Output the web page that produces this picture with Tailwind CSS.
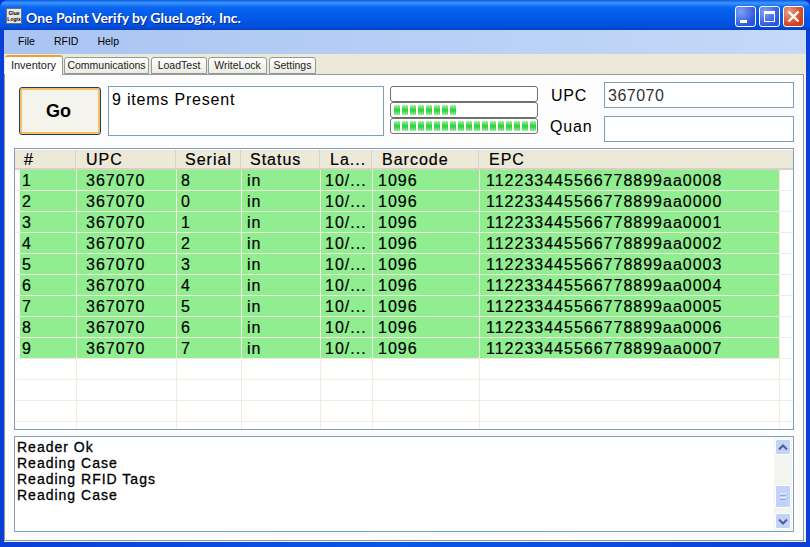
<!DOCTYPE html>
<html lang="en">

<head>
  <meta charset="UTF-8">
  <title>One Point Verify by GlueLogix, Inc.</title>
  <script src="https://cdn.jsdelivr.net/npm/@tailwindcss/browser@4"></script>
</head>

<body class="w-[810px] h-[547px] overflow-hidden bg-[#0831d9] font-['Liberation_Sans',sans-serif] text-black">
  <div class="h-[547px] flex flex-col rounded-t-lg overflow-hidden bg-[linear-gradient(to_right,#0a3fd8,#0a57e8_50%,#0a3fd8)]">

    <!-- title bar -->
    <div class="h-[30px] shrink-0 flex items-center pl-[6px] pr-[6px] pt-[2px] bg-[linear-gradient(to_bottom,#0a5be0_0px,#3d95ff_3px,#0a66f0_7px,#0358e8_18px,#0350e0_26px,#0240c8_30px)]">
      <div class="w-4 h-4 bg-[#e8e8e8] border border-gray-500 flex flex-col items-center justify-center text-[5px] leading-[6px] font-bold overflow-hidden">
        <span>Glue</span>
        <span>Logix</span>
      </div>
      <div class="ml-[4px] mt-[2px] text-white font-bold text-[14px] font-['Lato',sans-serif] [text-shadow:1px_1px_0_#0a2a90]">One Point Verify by GlueLogix, Inc.</div>
      <div class="ml-auto flex gap-[3px]">
        <div class="relative w-[21px] h-[21px] rounded-[3px] border border-white bg-[radial-gradient(circle_at_25%_25%,#7f9ff5,#2a55dd_75%)]">
          <div class="absolute left-[4px] top-[13px] w-[7px] h-[3px] bg-white"></div>
        </div>
        <div class="relative w-[21px] h-[21px] rounded-[3px] border border-white bg-[radial-gradient(circle_at_25%_25%,#7f9ff5,#2a55dd_75%)]">
          <div class="absolute left-[4px] top-[4px] w-[11px] h-[11px] border border-white border-t-[3px]"></div>
        </div>
        <div class="w-[21px] h-[21px] rounded-[3px] border border-white bg-[radial-gradient(circle_at_25%_25%,#ec9a80,#d2401c_70%)] flex items-center justify-center">
          <svg width="13" height="13" viewBox="0 0 13 13"><path d="M1.5 1.5 11.5 11.5M11.5 1.5 1.5 11.5" stroke="#fff" stroke-width="2.4" /></svg>
        </div>
      </div>
    </div>

    <!-- window body -->
    <div class="h-[512px] mx-[4px] flex flex-col bg-[#f3f2ec]">

      <!-- menu -->
      <div class="h-[24px] shrink-0 flex items-center pl-[14px] gap-[19px] text-[10.5px] bg-[linear-gradient(to_right,#a9c4f2,#c5d9f8)]">
        <span>File</span>
        <span>RFID</span>
        <span>Help</span>
      </div>

      <!-- tabs -->
      <div class="h-[20px] shrink-0 flex items-end gap-[1px] pl-[1px] bg-[#ece9d8] text-[11px] text-[#222]">
        <div class="relative z-10 w-[58px] h-[20px] -mb-[1px] flex items-center justify-center pb-[2px] bg-white border-r border-[#919b9c] border-t-[2px] border-t-[#f0a030] rounded-t-[3px]">Inventory</div>
        <div class="w-[85px] h-[17px] flex items-center justify-center text-[10.5px] bg-[linear-gradient(to_bottom,#ffffff,#ecebe0)] border border-[#919b9c] rounded-t-[3px]">Communications</div>
        <div class="ml-[1px] w-[56px] h-[17px] flex items-center justify-center text-[10.5px] bg-[linear-gradient(to_bottom,#ffffff,#ecebe0)] border border-[#919b9c] rounded-t-[3px]">LoadTest</div>
        <div class="w-[59px] h-[17px] flex items-center justify-center text-[10.5px] bg-[linear-gradient(to_bottom,#ffffff,#ecebe0)] border border-[#919b9c] rounded-t-[3px]">WriteLock</div>
        <div class="ml-[1px] w-[47px] h-[17px] flex items-center justify-center text-[10.5px] bg-[linear-gradient(to_bottom,#ffffff,#ecebe0)] border border-[#919b9c] rounded-t-[3px]">Settings</div>
      </div>

      <!-- tab page -->
      <div class="w-[800px] h-[467px] flex flex-col border border-[#919b9c] bg-[#fdfdfe] pl-[9px] pr-[9px]">

        <!-- top controls -->
        <div class="h-[73px] shrink-0 flex">
          <button class="ml-[5px] mt-[12px] w-[82px] h-[48px] rounded-[3px] border border-[#1f3f70] bg-[#f4f3ec] shadow-[inset_0_0_0_2px_#f5c060] text-[18px] font-bold pr-[3px]">Go</button>
          <div class="ml-[7px] mt-[11px] w-[276px] h-[50px] border border-[#7f9db9] bg-white pl-[3px] pt-[3px] text-[16px] leading-[20px] tracking-[0.8px]">9 items Present</div>

          <div class="ml-[6px] mt-[11px] w-[148px] flex flex-col">
            <div class="h-[16px] border border-[#707070] rounded-[3px] bg-white"></div>
            <div class="h-[16px] border border-[#707070] rounded-[3px] bg-white py-[2px] pl-[3px] flex gap-[2px]">
              <i class="w-[6px] bg-[linear-gradient(to_bottom,#b4efb8,#2ed63e_45%,#2ed63e_60%,#a4ebaa)]"></i><i class="w-[6px] bg-[linear-gradient(to_bottom,#b4efb8,#2ed63e_45%,#2ed63e_60%,#a4ebaa)]"></i><i class="w-[6px] bg-[linear-gradient(to_bottom,#b4efb8,#2ed63e_45%,#2ed63e_60%,#a4ebaa)]"></i><i class="w-[6px] bg-[linear-gradient(to_bottom,#b4efb8,#2ed63e_45%,#2ed63e_60%,#a4ebaa)]"></i><i class="w-[6px] bg-[linear-gradient(to_bottom,#b4efb8,#2ed63e_45%,#2ed63e_60%,#a4ebaa)]"></i><i class="w-[6px] bg-[linear-gradient(to_bottom,#b4efb8,#2ed63e_45%,#2ed63e_60%,#a4ebaa)]"></i><i class="w-[6px] bg-[linear-gradient(to_bottom,#b4efb8,#2ed63e_45%,#2ed63e_60%,#a4ebaa)]"></i><i class="w-[6px] bg-[linear-gradient(to_bottom,#b4efb8,#2ed63e_45%,#2ed63e_60%,#a4ebaa)]"></i>
            </div>
            <div class="h-[16px] border border-[#707070] rounded-[3px] bg-white py-[2px] pl-[3px] flex gap-[2px] overflow-hidden">
              <i class="w-[6px] shrink-0 bg-[linear-gradient(to_bottom,#b4efb8,#2ed63e_45%,#2ed63e_60%,#a4ebaa)]"></i><i class="w-[6px] shrink-0 bg-[linear-gradient(to_bottom,#b4efb8,#2ed63e_45%,#2ed63e_60%,#a4ebaa)]"></i><i class="w-[6px] shrink-0 bg-[linear-gradient(to_bottom,#b4efb8,#2ed63e_45%,#2ed63e_60%,#a4ebaa)]"></i><i class="w-[6px] shrink-0 bg-[linear-gradient(to_bottom,#b4efb8,#2ed63e_45%,#2ed63e_60%,#a4ebaa)]"></i><i class="w-[6px] shrink-0 bg-[linear-gradient(to_bottom,#b4efb8,#2ed63e_45%,#2ed63e_60%,#a4ebaa)]"></i><i class="w-[6px] shrink-0 bg-[linear-gradient(to_bottom,#b4efb8,#2ed63e_45%,#2ed63e_60%,#a4ebaa)]"></i><i class="w-[6px] shrink-0 bg-[linear-gradient(to_bottom,#b4efb8,#2ed63e_45%,#2ed63e_60%,#a4ebaa)]"></i><i class="w-[6px] shrink-0 bg-[linear-gradient(to_bottom,#b4efb8,#2ed63e_45%,#2ed63e_60%,#a4ebaa)]"></i><i class="w-[6px] shrink-0 bg-[linear-gradient(to_bottom,#b4efb8,#2ed63e_45%,#2ed63e_60%,#a4ebaa)]"></i><i class="w-[6px] shrink-0 bg-[linear-gradient(to_bottom,#b4efb8,#2ed63e_45%,#2ed63e_60%,#a4ebaa)]"></i><i class="w-[6px] shrink-0 bg-[linear-gradient(to_bottom,#b4efb8,#2ed63e_45%,#2ed63e_60%,#a4ebaa)]"></i><i class="w-[6px] shrink-0 bg-[linear-gradient(to_bottom,#b4efb8,#2ed63e_45%,#2ed63e_60%,#a4ebaa)]"></i><i class="w-[6px] shrink-0 bg-[linear-gradient(to_bottom,#b4efb8,#2ed63e_45%,#2ed63e_60%,#a4ebaa)]"></i><i class="w-[6px] shrink-0 bg-[linear-gradient(to_bottom,#b4efb8,#2ed63e_45%,#2ed63e_60%,#a4ebaa)]"></i><i class="w-[6px] shrink-0 bg-[linear-gradient(to_bottom,#b4efb8,#2ed63e_45%,#2ed63e_60%,#a4ebaa)]"></i><i class="w-[6px] shrink-0 bg-[linear-gradient(to_bottom,#b4efb8,#2ed63e_45%,#2ed63e_60%,#a4ebaa)]"></i><i class="w-[6px] shrink-0 bg-[linear-gradient(to_bottom,#b4efb8,#2ed63e_45%,#2ed63e_60%,#a4ebaa)]"></i><i class="w-[6px] shrink-0 bg-[linear-gradient(to_bottom,#b4efb8,#2ed63e_45%,#2ed63e_60%,#a4ebaa)]"></i>
            </div>
          </div>

          <div class="ml-[12px] mt-[7px] flex flex-col gap-[8px] text-[16px] tracking-[0.8px]">
            <div class="h-[26px] flex items-center">
              <span class="w-[54px] pl-[1px] pt-[1px]">UPC</span>
              <div class="w-[190px] h-[26px] border border-[#7f9db9] bg-white pl-[3px] pt-[1px] flex items-center text-[#333] tracking-[0.5px]">367070</div>
            </div>
            <div class="h-[26px] flex items-center">
              <span class="w-[54px] -mt-[4px]">Quan</span>
              <div class="w-[190px] h-[26px] border border-[#7f9db9] bg-white"></div>
            </div>
          </div>
        </div>

        <!-- grid -->
        <div class="w-[780px] h-[282px] shrink-0 border border-[#7f9db9] bg-white overflow-hidden text-[16px] tracking-[1px] [-webkit-text-stroke:0.2px_black]">
          <div class="mt-[1px] h-[20px] flex bg-[#ece9d8] border-b-[2px] border-[#d6d2c2] leading-[20px]">
            <div class="w-[60px] pl-[9px]">#</div>
            <div class="w-[100px] pl-[10px] border-l border-[#d8d5c6]">UPC</div>
            <div class="w-[65px] pl-[9px] border-l border-[#d8d5c6]">Serial</div>
            <div class="w-[79px] pl-[9px] border-l border-[#d8d5c6]">Status</div>
            <div class="w-[52px] pl-[10px] border-l border-[#d8d5c6]">La...</div>
            <div class="w-[107px] pl-[10px] border-l border-[#d8d5c6]">Barcode</div>
            <div class="w-[300px] pl-[10px] border-l border-[#d8d5c6]">EPC</div>
          </div>

          <div class="flex flex-col">
            <div class="h-[21px] flex pl-[5px] leading-[22px] border-b border-[#f0eddf]"><div class="w-[57px] pl-[2px] bg-[#90ee90] border-r border-[#f0eddf]">1</div><div class="w-[100px] pl-[9px] bg-[#90ee90] border-r border-[#f0eddf]">367070</div><div class="w-[65px] pl-[4px] bg-[#90ee90] border-r border-[#f0eddf]">8</div><div class="w-[79px] pl-[5px] bg-[#90ee90] border-r border-[#f0eddf]">in</div><div class="w-[52px] pl-[4px] bg-[#90ee90] border-r border-[#f0eddf]">10/...</div><div class="w-[107px] pl-[5px] bg-[#90ee90] border-r border-[#f0eddf]">1096</div><div class="w-[300px] pl-[6px] bg-[#90ee90] border-r border-[#f0eddf]">112233445566778899aa0008</div></div>
            <div class="h-[21px] flex pl-[5px] leading-[22px] border-b border-[#f0eddf]"><div class="w-[57px] pl-[2px] bg-[#90ee90] border-r border-[#f0eddf]">2</div><div class="w-[100px] pl-[9px] bg-[#90ee90] border-r border-[#f0eddf]">367070</div><div class="w-[65px] pl-[4px] bg-[#90ee90] border-r border-[#f0eddf]">0</div><div class="w-[79px] pl-[5px] bg-[#90ee90] border-r border-[#f0eddf]">in</div><div class="w-[52px] pl-[4px] bg-[#90ee90] border-r border-[#f0eddf]">10/...</div><div class="w-[107px] pl-[5px] bg-[#90ee90] border-r border-[#f0eddf]">1096</div><div class="w-[300px] pl-[6px] bg-[#90ee90] border-r border-[#f0eddf]">112233445566778899aa0000</div></div>
            <div class="h-[21px] flex pl-[5px] leading-[22px] border-b border-[#f0eddf]"><div class="w-[57px] pl-[2px] bg-[#90ee90] border-r border-[#f0eddf]">3</div><div class="w-[100px] pl-[9px] bg-[#90ee90] border-r border-[#f0eddf]">367070</div><div class="w-[65px] pl-[4px] bg-[#90ee90] border-r border-[#f0eddf]">1</div><div class="w-[79px] pl-[5px] bg-[#90ee90] border-r border-[#f0eddf]">in</div><div class="w-[52px] pl-[4px] bg-[#90ee90] border-r border-[#f0eddf]">10/...</div><div class="w-[107px] pl-[5px] bg-[#90ee90] border-r border-[#f0eddf]">1096</div><div class="w-[300px] pl-[6px] bg-[#90ee90] border-r border-[#f0eddf]">112233445566778899aa0001</div></div>
            <div class="h-[21px] flex pl-[5px] leading-[22px] border-b border-[#f0eddf]"><div class="w-[57px] pl-[2px] bg-[#90ee90] border-r border-[#f0eddf]">4</div><div class="w-[100px] pl-[9px] bg-[#90ee90] border-r border-[#f0eddf]">367070</div><div class="w-[65px] pl-[4px] bg-[#90ee90] border-r border-[#f0eddf]">2</div><div class="w-[79px] pl-[5px] bg-[#90ee90] border-r border-[#f0eddf]">in</div><div class="w-[52px] pl-[4px] bg-[#90ee90] border-r border-[#f0eddf]">10/...</div><div class="w-[107px] pl-[5px] bg-[#90ee90] border-r border-[#f0eddf]">1096</div><div class="w-[300px] pl-[6px] bg-[#90ee90] border-r border-[#f0eddf]">112233445566778899aa0002</div></div>
            <div class="h-[21px] flex pl-[5px] leading-[22px] border-b border-[#f0eddf]"><div class="w-[57px] pl-[2px] bg-[#90ee90] border-r border-[#f0eddf]">5</div><div class="w-[100px] pl-[9px] bg-[#90ee90] border-r border-[#f0eddf]">367070</div><div class="w-[65px] pl-[4px] bg-[#90ee90] border-r border-[#f0eddf]">3</div><div class="w-[79px] pl-[5px] bg-[#90ee90] border-r border-[#f0eddf]">in</div><div class="w-[52px] pl-[4px] bg-[#90ee90] border-r border-[#f0eddf]">10/...</div><div class="w-[107px] pl-[5px] bg-[#90ee90] border-r border-[#f0eddf]">1096</div><div class="w-[300px] pl-[6px] bg-[#90ee90] border-r border-[#f0eddf]">112233445566778899aa0003</div></div>
            <div class="h-[21px] flex pl-[5px] leading-[22px] border-b border-[#f0eddf]"><div class="w-[57px] pl-[2px] bg-[#90ee90] border-r border-[#f0eddf]">6</div><div class="w-[100px] pl-[9px] bg-[#90ee90] border-r border-[#f0eddf]">367070</div><div class="w-[65px] pl-[4px] bg-[#90ee90] border-r border-[#f0eddf]">4</div><div class="w-[79px] pl-[5px] bg-[#90ee90] border-r border-[#f0eddf]">in</div><div class="w-[52px] pl-[4px] bg-[#90ee90] border-r border-[#f0eddf]">10/...</div><div class="w-[107px] pl-[5px] bg-[#90ee90] border-r border-[#f0eddf]">1096</div><div class="w-[300px] pl-[6px] bg-[#90ee90] border-r border-[#f0eddf]">112233445566778899aa0004</div></div>
            <div class="h-[21px] flex pl-[5px] leading-[22px] border-b border-[#f0eddf]"><div class="w-[57px] pl-[2px] bg-[#90ee90] border-r border-[#f0eddf]">7</div><div class="w-[100px] pl-[9px] bg-[#90ee90] border-r border-[#f0eddf]">367070</div><div class="w-[65px] pl-[4px] bg-[#90ee90] border-r border-[#f0eddf]">5</div><div class="w-[79px] pl-[5px] bg-[#90ee90] border-r border-[#f0eddf]">in</div><div class="w-[52px] pl-[4px] bg-[#90ee90] border-r border-[#f0eddf]">10/...</div><div class="w-[107px] pl-[5px] bg-[#90ee90] border-r border-[#f0eddf]">1096</div><div class="w-[300px] pl-[6px] bg-[#90ee90] border-r border-[#f0eddf]">112233445566778899aa0005</div></div>
            <div class="h-[21px] flex pl-[5px] leading-[22px] border-b border-[#f0eddf]"><div class="w-[57px] pl-[2px] bg-[#90ee90] border-r border-[#f0eddf]">8</div><div class="w-[100px] pl-[9px] bg-[#90ee90] border-r border-[#f0eddf]">367070</div><div class="w-[65px] pl-[4px] bg-[#90ee90] border-r border-[#f0eddf]">6</div><div class="w-[79px] pl-[5px] bg-[#90ee90] border-r border-[#f0eddf]">in</div><div class="w-[52px] pl-[4px] bg-[#90ee90] border-r border-[#f0eddf]">10/...</div><div class="w-[107px] pl-[5px] bg-[#90ee90] border-r border-[#f0eddf]">1096</div><div class="w-[300px] pl-[6px] bg-[#90ee90] border-r border-[#f0eddf]">112233445566778899aa0006</div></div>
            <div class="h-[21px] flex pl-[5px] leading-[22px] border-b border-[#f0eddf]"><div class="w-[57px] pl-[2px] bg-[#90ee90] border-r border-[#f0eddf]">9</div><div class="w-[100px] pl-[9px] bg-[#90ee90] border-r border-[#f0eddf]">367070</div><div class="w-[65px] pl-[4px] bg-[#90ee90] border-r border-[#f0eddf]">7</div><div class="w-[79px] pl-[5px] bg-[#90ee90] border-r border-[#f0eddf]">in</div><div class="w-[52px] pl-[4px] bg-[#90ee90] border-r border-[#f0eddf]">10/...</div><div class="w-[107px] pl-[5px] bg-[#90ee90] border-r border-[#f0eddf]">1096</div><div class="w-[300px] pl-[6px] bg-[#90ee90] border-r border-[#f0eddf]">112233445566778899aa0007</div></div>

            <div class="h-[21px] flex pl-[5px] border-b border-[#f0eddf]"><div class="w-[57px] border-r border-[#f0eddf]"></div><div class="w-[100px] border-r border-[#f0eddf]"></div><div class="w-[65px] border-r border-[#f0eddf]"></div><div class="w-[79px] border-r border-[#f0eddf]"></div><div class="w-[52px] border-r border-[#f0eddf]"></div><div class="w-[107px] border-r border-[#f0eddf]"></div><div class="w-[300px] border-r border-[#f0eddf]"></div></div>
            <div class="h-[21px] flex pl-[5px] border-b border-[#f0eddf]"><div class="w-[57px] border-r border-[#f0eddf]"></div><div class="w-[100px] border-r border-[#f0eddf]"></div><div class="w-[65px] border-r border-[#f0eddf]"></div><div class="w-[79px] border-r border-[#f0eddf]"></div><div class="w-[52px] border-r border-[#f0eddf]"></div><div class="w-[107px] border-r border-[#f0eddf]"></div><div class="w-[300px] border-r border-[#f0eddf]"></div></div>
            <div class="h-[21px] flex pl-[5px] border-b border-[#f0eddf]"><div class="w-[57px] border-r border-[#f0eddf]"></div><div class="w-[100px] border-r border-[#f0eddf]"></div><div class="w-[65px] border-r border-[#f0eddf]"></div><div class="w-[79px] border-r border-[#f0eddf]"></div><div class="w-[52px] border-r border-[#f0eddf]"></div><div class="w-[107px] border-r border-[#f0eddf]"></div><div class="w-[300px] border-r border-[#f0eddf]"></div></div>
            <div class="h-[7px] flex pl-[5px]"><div class="w-[57px] border-r border-[#f0eddf]"></div><div class="w-[100px] border-r border-[#f0eddf]"></div><div class="w-[65px] border-r border-[#f0eddf]"></div><div class="w-[79px] border-r border-[#f0eddf]"></div><div class="w-[52px] border-r border-[#f0eddf]"></div><div class="w-[107px] border-r border-[#f0eddf]"></div><div class="w-[300px] border-r border-[#f0eddf]"></div></div>
          </div>
        </div>

        <!-- log -->
        <div class="mt-[6px] w-[780px] h-[96px] shrink-0 flex border border-[#7f9db9] bg-white">
          <div class="flex-1 pl-[2px] pt-[2px] text-[14px] leading-[16px] tracking-[1px] [-webkit-text-stroke:0.3px_black]">
            <div>Reader Ok</div>
            <div>Reading Case</div>
            <div>Reading RFID Tags</div>
            <div>Reading Case</div>
          </div>
          <div class="w-[18px] mr-[1px] my-[1px] px-[1px] pt-[1px] pb-[1px] flex flex-col bg-[#f3f3ef]">
            <div class="h-[16px] rounded-[2px] border border-white bg-[#c1d3fb] flex items-center justify-center">
              <svg width="10" height="7" viewBox="0 0 10 7"><path d="M1 5.5 5 1.5 9 5.5" fill="none" stroke="#4d6185" stroke-width="2" /></svg>
            </div>
            <div class="h-[30px]"></div>
            <div class="h-[23px] rounded-[2px] border border-white bg-[#c1d3fb] flex flex-col items-center justify-center gap-[1px]">
              <i class="w-[6px] h-[1px] bg-[#eef3ff]"></i><i class="w-[6px] h-[1px] bg-[#8ea6d8]"></i><i class="w-[6px] h-[1px] bg-[#eef3ff]"></i><i class="w-[6px] h-[1px] bg-[#8ea6d8]"></i>
            </div>
            <div class="flex-1"></div>
            <div class="h-[16px] rounded-[2px] border border-white bg-[#c1d3fb] flex items-center justify-center">
              <svg width="10" height="7" viewBox="0 0 10 7"><path d="M1 1.5 5 5.5 9 1.5" fill="none" stroke="#4d6185" stroke-width="2" /></svg>
            </div>
          </div>
        </div>
      </div>
    </div>
  </div>
</body>

</html>
